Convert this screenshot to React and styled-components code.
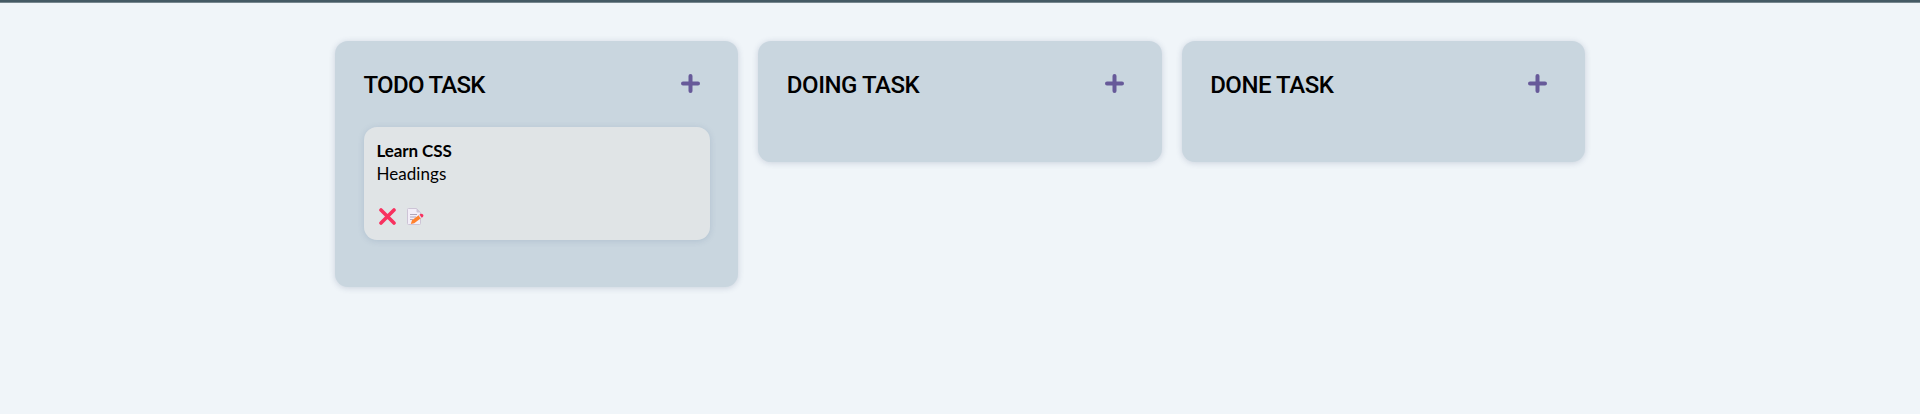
import React from "react";
import styled, { createGlobalStyle } from "styled-components";

const GlobalStyle = createGlobalStyle`
  * { box-sizing: border-box; }
  body { margin: 0; background: #f0f5f9; color: #000; }
`;

const Page = styled.div`
  min-height: 414px;
  background: #f0f5f9;
  border-top: 2px solid #455a64;
  box-shadow: inset 0 1px 0 #77878f;
`;

const Board = styled.main`
  width: 1250px;
  margin: 0 auto;
  padding-top: 39px;
  display: grid;
  grid-template-columns: repeat(3, 1fr);
  align-items: start;
  gap: 20px;
`;

const Column = styled.section`
  min-height: 121px;
  padding: 29px 28px 47px 29px;
  border-radius: 13px;
  background: #c9d6df;
  box-shadow: 0 1px 6px rgba(50, 70, 110, 0.2);
`;

const ColumnHeader = styled.header`
  display: flex;
  justify-content: space-between;
  align-items: center;
  height: 29px;
  padding-right: 10px;
`;

const Title = styled.h2`
  margin: 2px 0 0 -0.5px;
  font: 500 24px/29px Roboto, "Liberation Sans", sans-serif;
  letter-spacing: ${(p) => p.$tracking}px;
  white-space: nowrap;
`;

const IconButton = styled.button`
  display: flex;
  padding: 0;
  border: 0;
  background: none;
  cursor: pointer;
`;

const AddButton = styled(IconButton)`
  margin-bottom: 2px;
`;

const Card = styled.article`
  height: 113px;
  margin-top: 28px;
  padding: 12px 12.5px;
  border-radius: 13px;
  background: #e0e4e6;
  box-shadow: 0 1px 6px rgba(80, 110, 150, 0.2);
  font: 400 17px/23px Lato, "Open Sans", sans-serif;
`;

const CardTitle = styled.div`
  font-weight: 700;
  letter-spacing: -0.1px;
`;

const CardText = styled.div`
  letter-spacing: 0.05px;
`;

const Actions = styled.div`
  display: flex;
  gap: 11px;
  margin-top: 23px;
  padding-left: 2px;
`;

const PlusIcon = () => (
  <svg width="19" height="19" viewBox="0 0 19 19">
    <path d="M9.5 2v15M2 9.5h15" stroke="#675a99" strokeWidth="4" strokeLinecap="round" />
  </svg>
);

const CrossIcon = () => (
  <svg width="17" height="17" viewBox="0 0 17 17">
    <path d="M2 2l13 13M15 2L2 15" stroke="#f8315f" strokeWidth="3.6" strokeLinecap="round" />
  </svg>
);

const MemoIcon = () => (
  <svg width="17" height="17" viewBox="0 0 17 17">
    <path d="M1.5.5h8l4 4v11a1 1 0 0 1-1 1h-11a1 1 0 0 1-1-1v-14a1 1 0 0 1 1-1z" fill="#f3eef8" stroke="#cdc4d6" />
    <path d="M9.5.5v3a1 1 0 0 0 1 1h3z" fill="#cdc4d6" />
    <path d="M3 6.5h7M3 9h6M3 11.5h3" stroke="#b0a6ba" />
    <path d="M5 12.2l7-5.2 2.2 3-7 5.2-3.4.8z" fill="#ff822d" />
    <path d="M11.5 7.4l1-.8 2.2 3-1 .8z" fill="#e1d8ec" />
    <path d="M12.5 6.6l1-.7c1-.6 2 0 2.5.7.6.8.6 1.7-.2 2.3l-1.1.8z" fill="#f8315f" />
  </svg>
);

const columns = [
  { title: "TODO TASK", tracking: -0.7, tasks: [{ title: "Learn CSS", text: "Headings" }] },
  { title: "DOING TASK", tracking: -0.45, tasks: [] },
  { title: "DONE TASK", tracking: -0.45, tasks: [] },
];

export default function App() {
  return (
    <Page>
      <GlobalStyle />
      <Board>
        {columns.map((column) => (
          <Column key={column.title}>
            <ColumnHeader>
              <Title $tracking={column.tracking}>{column.title}</Title>
              <AddButton aria-label="Add task"><PlusIcon /></AddButton>
            </ColumnHeader>
            {column.tasks.map((task) => (
              <Card key={task.title}>
                <CardTitle>{task.title}</CardTitle>
                <CardText>{task.text}</CardText>
                <Actions>
                  <IconButton aria-label="Delete task"><CrossIcon /></IconButton>
                  <IconButton aria-label="Edit task"><MemoIcon /></IconButton>
                </Actions>
              </Card>
            ))}
          </Column>
        ))}
      </Board>
    </Page>
  );
}
